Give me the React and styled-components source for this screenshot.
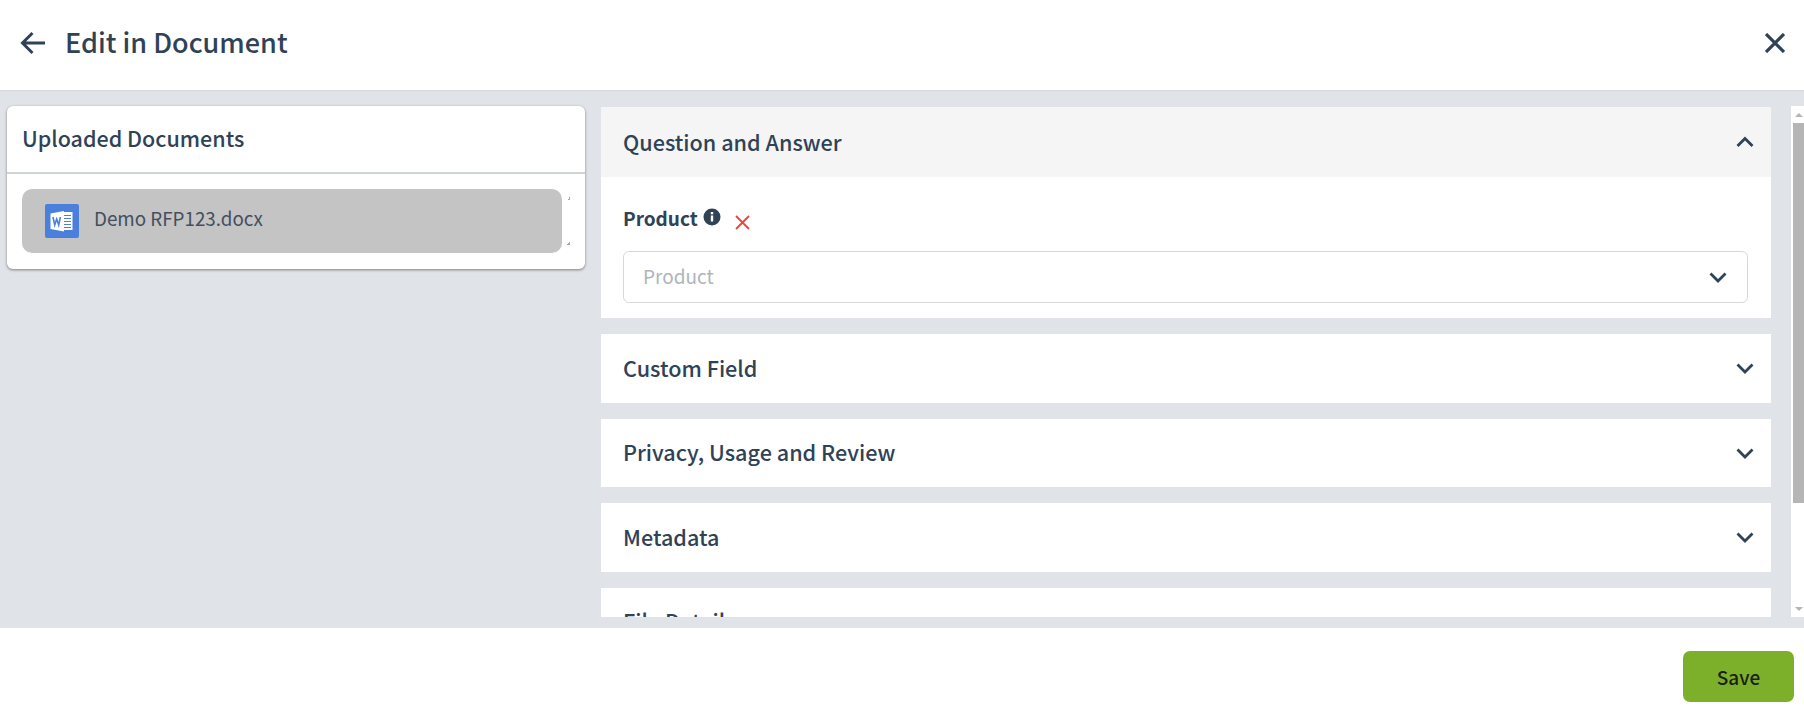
import React from "react";
import styled, { createGlobalStyle } from "styled-components";

const GlobalStyle = createGlobalStyle`
  html, body {
    margin: 0;
    padding: 0;
    background: #fff;
    font-family: "Noto Sans CJK SC", "Noto Sans", "Liberation Sans", sans-serif;
    color: #2f4256;
  }
  * { box-sizing: border-box; }
`;

const Page = styled.div`
  display: flex;
  flex-direction: column;
  height: 711px;
  overflow: hidden;
`;

const Header = styled.header`
  display: flex;
  align-items: center;
  height: 90px;
  padding: 0 19px 4px 20px;
`;

const IconButton = styled.span`
  display: inline-flex;
  color: #2f4256;
`;

const Title = styled.h1`
  flex: 1;
  margin: 0 0 2px 19px;
  font-size: 27px;
  line-height: 36px;
  font-weight: 500;
`;

const Main = styled.main`
  flex: 1;
  display: flex;
  min-height: 0;
  gap: 16px;
  padding: 16px 0 11px 7px;
  background: #e0e3e8;
  box-shadow: inset 0 2px 2px -1px rgba(0, 0, 0, 0.06);
`;

const DocCard = styled.section`
  align-self: flex-start;
  width: 578px;
  height: 163px;
  background: #fff;
  border-radius: 6px;
  box-shadow: 0 1px 3px rgba(0, 0, 0, 0.45);
`;

const DocCardTitle = styled.h2`
  display: flex;
  align-items: center;
  height: 68px;
  margin: 0;
  padding: 0 16px 4px 15px;
  font-size: 21.500px;
  font-weight: 500;
  border-bottom: 2px solid #cfd4d6;
`;

const DocRow = styled.div`
  display: flex;
  align-items: center;
  gap: 5px;
  padding: 15px 0 0 15px;
`;

const DocItem = styled.div`
  display: flex;
  align-items: center;
  gap: 15px;
  width: 540px;
  height: 64px;
  padding-left: 23px;
  background: #c4c4c4;
  border-radius: 10px;
  font-size: 18.800px;
  color: #434f5f;
`;

const DocName = styled.span`
  margin-bottom: 8px;
`;

const TinyScroll = styled.div`
  display: flex;
  flex-direction: column;
  justify-content: space-between;
  height: 48px;
  color: #a8a8a8;
`;

const TinyArrow = styled.span`
  display: block;
  width: 3px;
  height: 3px;
  background: linear-gradient(
    ${({ $down }) => ($down ? "45deg" : "135deg")},
    transparent 50%,
    currentColor 50%
  );
  transform: ${({ $down }) => ($down ? "rotate(90deg)" : "none")};
`;

const Accordions = styled.div`
  flex: 1;
  display: flex;
  flex-direction: column;
  gap: 16px;
  min-width: 0;
  overflow: hidden;
  margin-top: 1px;
`;

const Panel = styled.div`
  flex: none;
  background: #fff;
`;

const PanelHead = styled.div`
  display: flex;
  align-items: center;
  justify-content: space-between;
  height: ${({ $h }) => $h || 68.5}px;
  padding: 0 17px 0 22px;
  background: ${({ $open }) => ($open ? "#f5f5f5" : "#fff")};
  font-size: 21.600px;
  font-weight: 500;
`;

const HeadText = styled.span`
  margin-bottom: 2px;
`;

const PanelBody = styled.div`
  height: 141px;
  padding: 29px 23px 0 22px;
`;

const FieldLabel = styled.div`
  display: flex;
  align-items: center;
  height: 24px;
  font-size: 19px;
  font-weight: 700;
`;

const LabelText = styled.span`
  margin-bottom: 2px;
`;

const InfoIcon = styled.svg`
  margin-left: 5px;
  margin-bottom: 3px;
`;

const RemoveIcon = styled.svg`
  margin: 8px 0 0 14px;
`;

const Select = styled.div`
  display: flex;
  align-items: center;
  justify-content: space-between;
  height: 52px;
  margin-top: 21px;
  padding: 0 20px 0 19px;
  border: 1px solid #d8d8d8;
  border-radius: 6px;
  font-size: 19px;
  color: #aeb4bc;
`;

const Placeholder = styled.span`
  margin-bottom: 4px;
`;

const ScrollTrack = styled.div`
  flex: none;
  display: flex;
  flex-direction: column;
  align-items: flex-end;
  width: 13px;
  margin-left: 4px;
  background: #fff;
`;

const ScrollArrow = styled.div`
  flex: none;
  display: flex;
  align-items: center;
  justify-content: center;
  width: 11px;
  height: 17px;
  &::before {
    content: "";
    border-left: 4px solid transparent;
    border-right: 4px solid transparent;
    ${({ $down }) =>
      $down ? "border-top: 4px solid #b5b5b5;" : "border-bottom: 4px solid #b5b5b5;"}
  }
`;

const ScrollThumb = styled.div`
  width: 11px;
  height: 380px;
  background: #b5b5b5;
`;

const ScrollSpacer = styled.div`
  flex: 1;
`;

const Footer = styled.footer`
  display: flex;
  justify-content: flex-end;
  align-items: flex-start;
  height: 83px;
  padding: 23px 10px 0 0;
`;

const SaveButton = styled.button`
  width: 111px;
  height: 51px;
  border: 0;
  border-radius: 7px;
  background: #7cb02a;
  color: #1a1f12;
  font: 500 19px "Noto Sans CJK SC", "Noto Sans", sans-serif;
`;

const Chevron = ({ up }) => (
  <svg width="18" height="18" viewBox="0 0 18 18" fill="none" stroke="#2f4256" strokeWidth="2.800">
    <path d={up ? "M1.500 13 9 5.500 16.500 13" : "M1.500 5.500 9 13 16.500 5.500"} />
  </svg>
);

const WordIcon = () => (
  <svg width="34" height="34" viewBox="0 0 34 34">
    <rect width="34" height="34" rx="2" fill="#4a7fdc" />
    <path d="M17 8h10.500v18H17z" fill="#fff" />
    <path d="M18 11.500h8M18 14.500h8M18 17.500h8M18 20.500h8M18 23.500h8" stroke="#4a7fdc" strokeWidth="1.100" />
    <path d="M5.500 9.500 19 7v20.500L5.500 25z" fill="#fff" />
    <path d="M8 13l1.700 8 2-6 2 6 1.700-8" fill="none" stroke="#4a7fdc" strokeWidth="1.600" />
  </svg>
);

const panels = ["Custom Field", "Privacy, Usage and Review", "Metadata", "File Details"];

export default function App() {
  return (
    <Page>
      <GlobalStyle />
      <Header>
        <IconButton>
          <svg width="26" height="24" viewBox="0 0 26 24" fill="none" stroke="currentColor" strokeWidth="3">
            <path d="M25 12H3M12.500 2 2.500 12l10 10" />
          </svg>
        </IconButton>
        <Title>Edit in Document</Title>
        <IconButton>
          <svg width="20" height="20" viewBox="0 0 20 20" fill="none" stroke="currentColor" strokeWidth="3.200">
            <path d="M1 1l18 18M19 1 1 19" />
          </svg>
        </IconButton>
      </Header>
      <Main>
        <DocCard>
          <DocCardTitle>Uploaded Documents</DocCardTitle>
          <DocRow>
            <DocItem>
              <WordIcon />
              <DocName>Demo RFP123.docx</DocName>
            </DocItem>
            <TinyScroll>
              <TinyArrow />
              <TinyArrow $down />
            </TinyScroll>
          </DocRow>
        </DocCard>
        <Accordions>
          <Panel>
            <PanelHead $open $h={70}>
              <HeadText>Question and Answer</HeadText>
              <Chevron up />
            </PanelHead>
            <PanelBody>
              <FieldLabel>
                <LabelText>Product</LabelText>
                <InfoIcon width="18" height="18" viewBox="0 0 18 18">
                  <circle cx="9" cy="9" r="8.500" fill="#2f4256" />
                  <rect x="7.800" y="7.500" width="2.400" height="6" fill="#fff" />
                  <rect x="7.800" y="4" width="2.400" height="2.300" fill="#fff" />
                </InfoIcon>
                <RemoveIcon width="15" height="15" viewBox="0 0 15 15" fill="none" stroke="#f5403a" strokeWidth="1.800">
                  <path d="M1 1l13 13M14 1 1 14" />
                </RemoveIcon>
              </FieldLabel>
              <Select>
                <Placeholder>Product</Placeholder>
                <Chevron />
              </Select>
            </PanelBody>
          </Panel>
          {panels.map((name) => (
            <Panel key={name}>
              <PanelHead>
                <HeadText>{name}</HeadText>
                <Chevron />
              </PanelHead>
            </Panel>
          ))}
        </Accordions>
        <ScrollTrack>
          <ScrollArrow />
          <ScrollThumb />
          <ScrollSpacer />
          <ScrollArrow $down />
        </ScrollTrack>
      </Main>
      <Footer>
        <SaveButton>Save</SaveButton>
      </Footer>
    </Page>
  );
}
